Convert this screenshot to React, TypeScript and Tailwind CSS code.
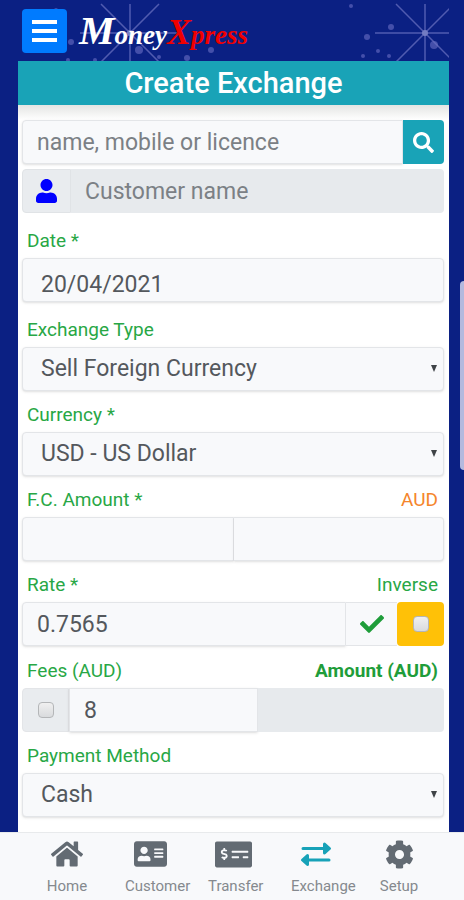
import React from 'react';
import { FaAddressCard, FaCheck, FaCog, FaHome, FaMoneyCheckAlt, FaSearch, FaUser } from 'react-icons/fa';

const inputClass = 'h-11 min-w-0 border border-[#e3e5e8] bg-[#f8f9fb] text-[23px] text-[#54585d] shadow-sm outline-none';

const sparks = [
  [71, 42, 3], [139, 50, 4], [159, 57, 2], [187, 58, 3], [211, 50, 3], [68, 60, 2], [95, 60, 2], [56, 10, 2],
  [351, 6, 2], [391, 27, 3], [367, 37, 3], [378, 51, 2], [363, 56, 2], [389, 56, 2], [434, 45, 4],
];

const Burst: React.FC<{ x: number; y: number }> = ({ x, y }) => (
  <g stroke="#7f83cf" strokeWidth="1.5" opacity="0.6">
    <path d={`M${x - 50} ${y}h100M${x} ${y - 29}v62M${x - 29} ${y - 29}l60 60M${x + 29} ${y - 29}l-60 60`} />
    <circle cx={x} cy={y} r="3" fill="#b9b9ee" stroke="none" />
  </g>
);

const NightSky = () => (
  <div className="absolute left-0 right-[15px] top-0 h-[61px] overflow-hidden">
    <svg className="h-full w-full" viewBox="0 0 449 61" preserveAspectRatio="none" aria-hidden="true">
      <Burst x={130} y={33} />
      <Burst x={425} y={33} />
      {sparks.map(([x, y, r]) => (
        <circle key={`${x}-${y}`} cx={x} cy={y} r={r} fill="#6a70c4" opacity="0.6" />
      ))}
    </svg>
  </div>
);

const ExchangeIcon = () => (
  <svg className="h-8 w-8" viewBox="0 0 32 32" fill="none" stroke="currentColor" strokeWidth="3" strokeLinecap="round" aria-hidden="true">
    <path d="M3 10.500h22M7 22h22" />
    <path d="M24.500 6l5 4.500-5 4.500zM7.500 17.500l-5 4.500 5 4.500z" fill="currentColor" strokeLinejoin="round" />
  </svg>
);

interface LabelRowProps {
  htmlFor: string;
  label: string;
  className?: string;
  children?: React.ReactNode;
}

const LabelRow: React.FC<LabelRowProps> = ({ htmlFor, label, className = 'mt-3', children }) => (
  <div className={`mb-[5px] flex justify-between pl-[5px] pr-[6px] text-[19px] leading-6 text-[#28a745] ${className}`}>
    <label htmlFor={htmlFor}>{label}</label>
    {children}
  </div>
);

interface SelectFieldProps {
  id: string;
  options: string[];
}

const SelectField: React.FC<SelectFieldProps> = ({ id, options }) => (
  <div className="relative">
    <select id={id} className={`${inputClass} block w-full appearance-none rounded px-[18px]`}>
      {options.map((option) => (
        <option key={option}>{option}</option>
      ))}
    </select>
    <svg className="pointer-events-none absolute right-[7px] top-[18px] h-[7px] w-1.5" viewBox="0 0 6 7" fill="#3f4347" aria-hidden="true">
      <path d="M0 0h6L3 7z" />
    </svg>
  </div>
);

const checkboxClass =
  'h-4 w-4 appearance-none rounded-sm border border-[#b4b6b8] bg-linear-to-b from-[#f0f0f0] to-[#d9dbdd] checked:bg-blue-500';

const navItems = [
  { label: 'Home', icon: <FaHome className="h-8 w-8" /> },
  { label: 'Customer', icon: <FaAddressCard className="h-8 w-[33px]" /> },
  { label: 'Transfer', icon: <FaMoneyCheckAlt className="h-[37px] w-[37px]" /> },
  { label: 'Exchange', icon: <ExchangeIcon />, active: true },
  { label: 'Setup', icon: <FaCog className="h-[29px] w-[29px]" /> },
];

export default function App() {
  return (
    <div className="relative flex min-h-screen flex-col bg-[#0b2083] font-['Roboto',sans-serif]">
      <NightSky />
      <header className="relative flex h-[61px] items-center gap-3 px-[22px]">
        <button type="button" aria-label="Menu" className="flex h-11 w-[45px] flex-col items-center justify-center gap-[5px] rounded bg-[#007bff]">
          <span className="h-1 w-[25px] bg-white" />
          <span className="h-1 w-[25px] bg-white" />
          <span className="h-1 w-[25px] bg-white" />
        </button>
        <a href="#home" className="flex items-baseline pt-1 font-['Liberation_Serif',serif] text-[27px] font-bold italic leading-10 text-white">
          <span className="text-[40px]">M</span>oney
          <span className="text-4xl text-[#f00000]">X</span>
          <span className="text-[#f00000]">press</span>
        </a>
      </header>

      <main className="relative ml-[18px] mr-[15px] flex-1 bg-white pb-3">
        <h1 className="h-11 bg-[#19a3b7] text-center text-[29px] font-medium leading-11 text-white">Create Exchange</h1>
        <div className="h-[15px] bg-linear-to-b from-[#e4e5e3] to-white" />

        <form className="pl-1 pr-[5px]" onSubmit={(e) => e.preventDefault()}>
          <div className="flex">
            <input type="text" aria-label="Search customer" placeholder="name, mobile or licence" className={`${inputClass} flex-1 rounded-l px-[14px] placeholder:text-[#7b8085]`} />
            <button type="submit" aria-label="Search" className="flex h-11 w-[41px] items-center justify-center rounded-r bg-[#19a3b7] text-white">
              <FaSearch className="h-[21px] w-[21px]" />
            </button>
          </div>
          <div className="mt-[5px] flex">
            <span className="flex h-11 w-[49px] items-center justify-center rounded-l border border-[#e0e3e6] bg-[#e9ecef] text-[#0000ff]">
              <FaUser className="h-6 w-[21px]" />
            </span>
            <input type="text" aria-label="Customer name" placeholder="Customer name" readOnly className="h-11 min-w-0 flex-1 rounded-r bg-[#e7eaed] px-[14px] text-[23px] outline-none placeholder:text-[#7b8085]" />
          </div>

          <LabelRow htmlFor="date" label="Date *" className="mt-4" />
          <input id="date" type="text" defaultValue="20/04/2021" className={`${inputClass} block w-full rounded px-[18px] pt-2`} />

          <LabelRow htmlFor="exchangeType" label="Exchange Type" className="mt-4" />
          <SelectField id="exchangeType" options={['Sell Foreign Currency', 'Buy Foreign Currency']} />

          <LabelRow htmlFor="currency" label="Currency *" />
          <SelectField id="currency" options={['USD - US Dollar']} />

          <LabelRow htmlFor="fcAmount" label="F.C. Amount *">
            <label htmlFor="audAmount" className="text-[#f5852b]">AUD</label>
          </LabelRow>
          <div className="flex">
            <input id="fcAmount" type="text" className={`${inputClass} flex-1 rounded-l px-[14px]`} />
            <input id="audAmount" type="text" className={`${inputClass} flex-1 rounded-r border-l-0 px-[14px]`} />
          </div>

          <LabelRow htmlFor="rate" label="Rate *">
            <label htmlFor="inverse">Inverse</label>
          </LabelRow>
          <div className="flex">
            <input id="rate" type="text" defaultValue="0.7565" className={`${inputClass} flex-1 rounded-l px-[14px]`} />
            <button type="button" aria-label="Confirm rate" className="flex h-11 w-[51px] items-center justify-center border-y border-[#e3e5e8] bg-[#f8f9fb] text-[#1f9d3a]">
              <FaCheck className="h-6 w-6" />
            </button>
            <span className="flex h-11 w-[47px] items-center justify-center rounded bg-[#ffc107]">
              <input id="inverse" type="checkbox" className={checkboxClass} />
            </span>
          </div>

          <LabelRow htmlFor="fees" label="Fees (AUD)" className="mt-[13px]">
            <label htmlFor="amount" className="font-bold text-[#1f9d3a]">Amount (AUD)</label>
          </LabelRow>
          <div className="flex">
            <span className="flex h-11 w-[47px] items-center justify-center rounded-l border border-[#e3e5e8] bg-[#e9ecef]">
              <input type="checkbox" aria-label="Apply fees" className={checkboxClass} />
            </span>
            <input id="fees" type="text" defaultValue="8" className={`${inputClass} flex-1 px-[14px]`} />
            <input id="amount" type="text" readOnly className="h-11 min-w-0 flex-1 rounded-r bg-[#e7eaed] px-[14px] text-[23px] outline-none" />
          </div>

          <LabelRow htmlFor="paymentMethod" label="Payment Method" />
          <SelectField id="paymentMethod" options={['Cash']} />
        </form>
      </main>

      <nav className="relative flex h-[68px] justify-between border-t border-[#e8eaec] bg-[#f8f9fb] pl-[42px] pr-10 pt-[3px]">
        {navItems.map(({ label, icon, active }) => (
          <a key={label} href={`#${label.toLowerCase()}`} className="w-[50px] whitespace-nowrap text-center text-[15px] leading-5 text-[#85898e]">
            <span className={`flex h-9 items-center justify-center ${active ? 'text-[#17a2b8]' : 'text-[#636b73]'}`}>{icon}</span>
            <span className="mt-1 block">{label}</span>
          </a>
        ))}
      </nav>

      {/* scroll thumb */}
      <div className="absolute right-0 top-[281px] h-[189px] w-1 rounded-l bg-[#b3b9de]" />
    </div>
  );
}
